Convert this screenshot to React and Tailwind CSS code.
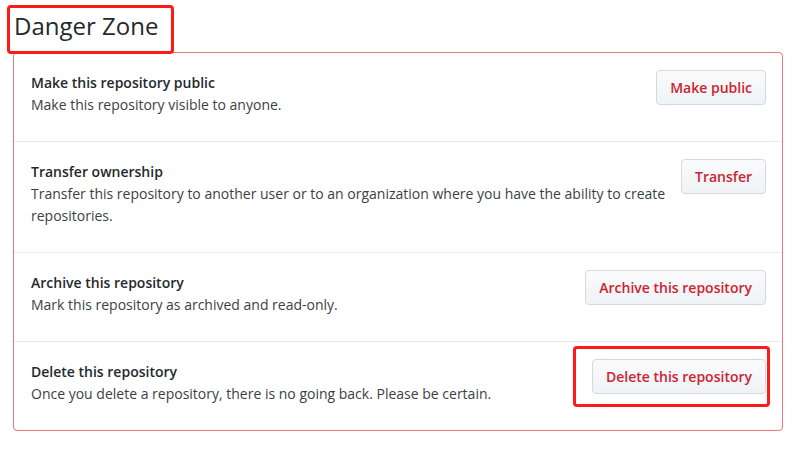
import React from 'react'

const rows = [
  {
    title: 'Make this repository public',
    desc: 'Make this repository visible to anyone.',
    action: 'Make public',
  },
  {
    title: 'Transfer ownership',
    desc: 'Transfer this repository to another user or to an organization where you have the ability to create repositories.',
    action: 'Transfer',
  },
  {
    title: 'Archive this repository',
    desc: 'Mark this repository as archived and read-only.',
    action: 'Archive this repository',
  },
  {
    title: 'Delete this repository',
    desc: 'Once you delete a repository, there is no going back. Please be certain.',
    action: 'Delete this repository',
    marked: true,
  },
]

function DangerButton({ children, marked }) {
  return (
    <div className="relative shrink-0 -mt-[2px]">
      <button className="h-[35px] px-[13px] rounded-[4px] border border-[#d5d8dc] bg-gradient-to-b from-[#fafbfc] to-[#eff3f6] text-[14px] font-semibold text-[#cb2431] whitespace-nowrap">
        {children}
      </button>
      {/* screenshot annotation */}
      {marked && (
        <div className="absolute -left-[19px] -right-[4px] -top-[13px] -bottom-[13px] border-[3px] border-[#ff1a1a] rounded-[4px] pointer-events-none" />
      )}
    </div>
  )
}

export default function App() {
  return (
    <div
      className="w-[800px] h-[453px] bg-white text-[#24292e] pt-[10px] pl-[13px] pr-[17px]"
      style={{ fontFamily: '"Open Sans", "Noto Sans", sans-serif' }}
    >
      <div className="relative h-[42px]">
        <h2 className="pl-[1px] text-[24px] leading-[32px] font-normal text-[#24292e]">Danger Zone</h2>
        {/* screenshot annotation */}
        <div className="absolute -left-[6px] w-[167px] -top-[5px] h-[49px] border-[3px] border-[#ff1a1a] rounded-[4px] pointer-events-none" />
      </div>

      <div className="border border-[#e9767e] rounded-[4px]">
        {rows.map((r, i) => (
          <div
            key={i}
            className={`flex items-start justify-between gap-3 pl-[17px] pr-[16px] pt-[19px] pb-[25px] ${i > 0 ? 'border-t border-[#e8eaed]' : ''}`}
          >
            <div className="text-[14px] leading-[22px]">
              <div className="font-semibold text-[#24292e]">{r.title}</div>
              <p className="text-[#3a3f44]">{r.desc}</p>
            </div>
            <DangerButton marked={r.marked}>{r.action}</DangerButton>
          </div>
        ))}
      </div>
    </div>
  )
}
